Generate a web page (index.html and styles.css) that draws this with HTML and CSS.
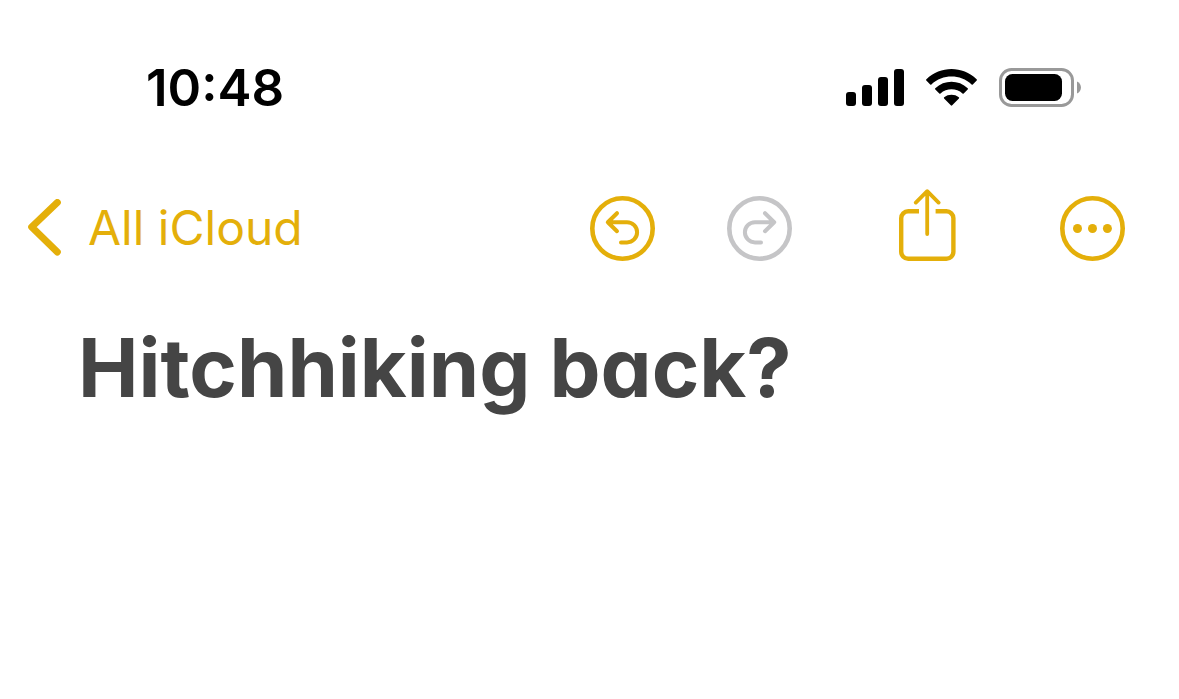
FILE: index.html
```html
<!DOCTYPE html>
<html lang="en">
<head>
<meta charset="utf-8">
<meta name="viewport" content="width=device-width, initial-scale=1">
<title>Hitchhiking back?</title>
<link rel="stylesheet" href="styles.css">
</head>
<body>
<header class="status">
  <time class="clock">10:48</time>
  <div class="indicators">
    <svg class="icon" width="58" height="37" viewBox="0 0 58 37" fill="#000" role="img" aria-label="Signal">
      <rect x="0" y="23" width="10" height="14" rx="3"/>
      <rect x="16" y="16" width="10" height="21" rx="3"/>
      <rect x="32" y="8" width="10" height="29" rx="3"/>
      <rect x="48" y="0" width="10" height="37" rx="3"/>
    </svg>
    <svg class="icon" width="51" height="37" viewBox="0 0 51 37" role="img" aria-label="Wi-Fi">
      <path d="M.4 10.300C14.500-3.400 36.500-3.400 50.600 10.300Q51.200 10.900 50.700 11.500L46.800 15.400Q46.200 16 45.600 15.400C34.300 5 16.700 5 5.400 15.400Q4.800 16 4.200 15.400L.3 11.500Q-.2 10.900.4 10.300Z" fill="#000"/>
      <path d="M9.300 19.300C18.300 10.700 32.700 10.700 41.700 19.300Q42.300 19.900 41.700 20.500L37.700 24.400Q37.100 25 36.500 24.400C30.400 18.900 20.600 18.900 14.500 24.400Q13.900 25 13.300 24.400L9.300 20.500Q8.700 19.900 9.300 19.300Z" fill="#000"/>
      <path d="M18.200 28.300C22.200 25 28.800 25 32.800 28.300Q33.500 28.900 32.900 29.500L26.200 36.300Q25.500 37 24.800 36.300L18.100 29.500Q17.500 28.900 18.200 28.300Z" fill="#000"/>
    </svg>
    <svg class="icon" width="83" height="39" viewBox="0 0 83 39" role="img" aria-label="Battery">
      <rect x="1.500" y="1.500" width="72" height="36" rx="11" fill="none" stroke="#999" stroke-width="3"/>
      <rect x="6" y="6" width="57" height="27" rx="7.500" fill="#000"/>
      <path d="M78 13.500C83.300 15.700 83.300 23.300 78 25.500Z" fill="#999"/>
    </svg>
  </div>
</header>
<nav class="toolbar">
  <a class="back" href="#">
    <svg class="icon" width="33" height="57" viewBox="0 0 33 57" fill="none" stroke="currentColor" stroke-width="7" stroke-linecap="round" stroke-linejoin="round" aria-hidden="true">
      <path d="M29.300 3.500L3.700 28L29.300 53"/>
    </svg>
    <span>All iCloud</span>
  </a>
  <div class="actions">
    <button class="tool undo" type="button" aria-label="Undo">
      <svg class="icon" width="65" height="65" viewBox="0 0 65 65" fill="none" stroke="currentColor" stroke-width="4" stroke-linecap="round" stroke-linejoin="round">
        <circle cx="32.500" cy="32.500" r="30.200" stroke-width="4.600"/>
        <path d="M27 17.200L17.800 26.200L27 35.200M18 26.200H37A10.100 10.100 0 0 1 37 46.400H31"/>
      </svg>
    </button>
    <button class="tool redo" type="button" aria-label="Redo" disabled>
      <svg class="icon" width="65" height="65" viewBox="0 0 65 65" fill="none" stroke="currentColor" stroke-width="4" stroke-linecap="round" stroke-linejoin="round">
        <circle cx="32.500" cy="32.500" r="30.200" stroke-width="4.600"/>
        <path d="M38 17.200L47.200 26.200L38 35.200M47 26.200H28A10.100 10.100 0 0 0 28 46.400H34"/>
      </svg>
    </button>
    <button class="tool share" type="button" aria-label="Share">
      <svg class="icon" width="57" height="72" viewBox="0 0 57 72" fill="none" stroke="currentColor" stroke-width="4">
        <path d="M20 22.300H9.200A7 7 0 0 0 2.200 29.300V62.800A7 7 0 0 0 9.200 69.800H47.400A7 7 0 0 0 54.400 62.800V29.300A7 7 0 0 0 47.400 22.300H36.600" stroke-width="4.400"/>
        <path d="M28.200 3V45M16.800 13.600L28.200 2.200L39.600 13.600" stroke-width="3.800" stroke-linecap="round" stroke-linejoin="round"/>
      </svg>
    </button>
    <button class="tool more" type="button" aria-label="More">
      <svg class="icon" width="65" height="65" viewBox="0 0 65 65" fill="currentColor">
        <circle cx="32.500" cy="32.500" r="30.200" fill="none" stroke="currentColor" stroke-width="4.600"/>
        <circle cx="17.500" cy="32.500" r="4.500"/>
        <circle cx="32.500" cy="32.500" r="4.500"/>
        <circle cx="47.400" cy="32.500" r="4.500"/>
      </svg>
    </button>
  </div>
</nav>
<main class="note">
  <h1 class="title">Hitchhiking back?</h1>
</main>
</body>
</html>
```
FILE: styles.css
```css
* {
  box-sizing: border-box;
}

body {
  margin: 0;
  background: #fff;
  font-family: Inter, Roboto, "Liberation Sans", sans-serif;
}

.icon {
  display: block;
  flex: none;
}

.status {
  display: flex;
  justify-content: space-between;
  align-items: center;
  padding: 58px 97px 0 146px;
}

.clock {
  font-size: 51px;
  line-height: 60px;
  font-weight: 600;
  color: #000;
}

.indicators {
  display: flex;
  align-items: center;
  gap: 22px;
  padding-bottom: 2px;
}

.toolbar {
  display: flex;
  justify-content: space-between;
  align-items: center;
  padding: 70px 54px 0 28px;
}

.back {
  display: flex;
  align-items: center;
  gap: 27px;
  color: #e4af0a;
  font-size: 48px;
  line-height: 60px;
  text-decoration: none;
}

.actions {
  display: flex;
  align-items: center;
  padding-top: 1px;
}

.tool {
  display: block;
  margin: 0;
  padding: 0;
  border: 0;
  background: none;
  color: #e4af0a;
}

.redo {
  margin-left: 72px;
  color: #c5c5c7;
}

.share {
  margin-left: 107px;
  padding-bottom: 6px;
}

.more {
  margin-left: 104px;
}

.note {
  padding: 51px 78px;
}

.title {
  margin: 0;
  font-size: 81px;
  line-height: 100px;
  font-weight: 700;
  font-feature-settings: "cv11";
  color: #454545;
}
```
